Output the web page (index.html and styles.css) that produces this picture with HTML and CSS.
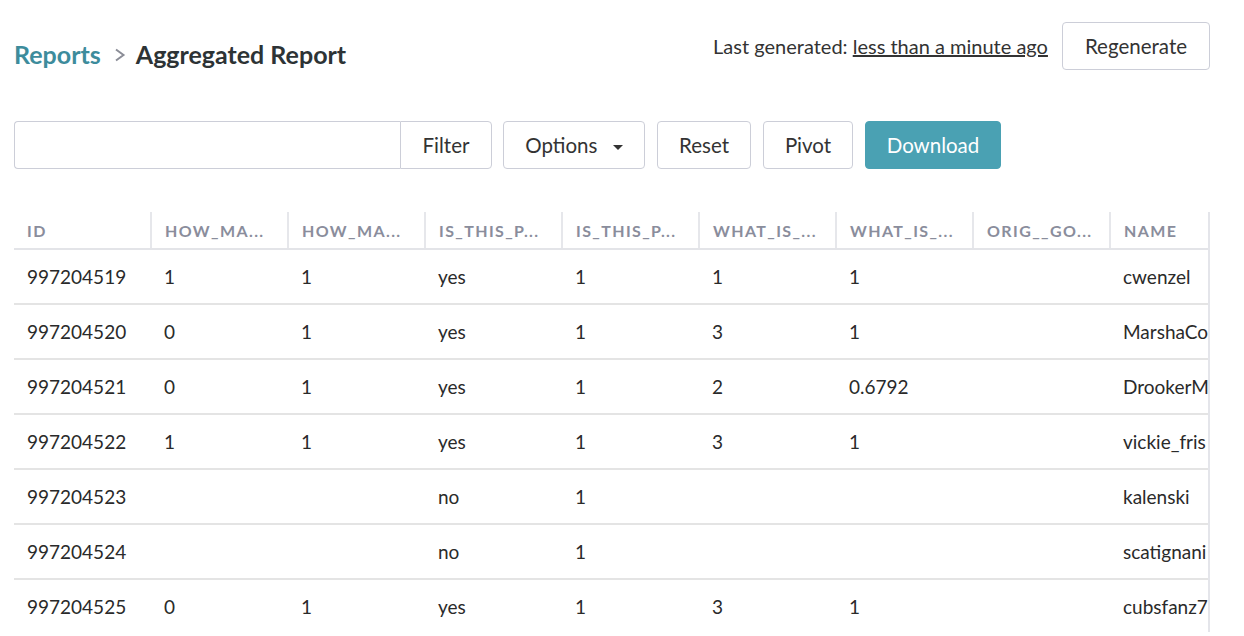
FILE: index.html
```html
<!DOCTYPE html>
<html lang="en">

<head>
    <meta charset="UTF-8">
    <meta name="viewport" content="width=device-width, initial-scale=1.0">
    <title>Aggregated Report</title>

    <link rel="stylesheet" href="styles.css">
</head>

<body>

    <div class="page">

        <header class="report-header">
            <h1 class="breadcrumb">
                <a class="breadcrumb__link" href="#">Reports</a>
                <svg class="breadcrumb__sep" width="12" height="14" viewBox="0 0 12 14">
                    <polyline points="2,1.5 9.5,7 2,12.5" fill="none" stroke="#8b8d97" stroke-width="2"/>
                </svg>
                <span class="breadcrumb__current">Aggregated Report</span>
            </h1>
            <div class="report-header__meta">
                <span class="generated">Last generated: <a href="#">less than a minute ago</a></span>
                <button class="btn">Regenerate</button>
            </div>
        </header>
        <!--/report-header-->

        <div class="toolbar">
            <div class="filter">
                <input class="filter__input" type="text">
                <button class="btn filter__btn">Filter</button>
            </div>
            <button class="btn btn--options">Options <span class="caret"></span></button>
            <button class="btn btn--reset">Reset</button>
            <button class="btn btn--pivot">Pivot</button>
            <button class="btn btn--primary">Download</button>
        </div>
        <!--/toolbar-->

        <div class="grid">
            <table class="grid__table">
                <thead>
                    <tr>
                        <th>ID</th>
                        <th>HOW_MA...</th>
                        <th>HOW_MA...</th>
                        <th>IS_THIS_P...</th>
                        <th>IS_THIS_P...</th>
                        <th>WHAT_IS_...</th>
                        <th>WHAT_IS_...</th>
                        <th>ORIG__GO...</th>
                        <th>NAME</th>
                    </tr>
                </thead>
                <tbody>
                    <tr>
                        <td>997204519</td><td>1</td><td>1</td><td>yes</td><td>1</td><td>1</td><td>1</td><td></td><td>cwenzel</td>
                    </tr>
                    <tr>
                        <td>997204520</td><td>0</td><td>1</td><td>yes</td><td>1</td><td>3</td><td>1</td><td></td><td>MarshaCo</td>
                    </tr>
                    <tr>
                        <td>997204521</td><td>0</td><td>1</td><td>yes</td><td>1</td><td>2</td><td>0.6792</td><td></td><td>DrookerM</td>
                    </tr>
                    <tr>
                        <td>997204522</td><td>1</td><td>1</td><td>yes</td><td>1</td><td>3</td><td>1</td><td></td><td>vickie_fris</td>
                    </tr>
                    <tr>
                        <td>997204523</td><td></td><td></td><td>no</td><td>1</td><td></td><td></td><td></td><td>kalenski</td>
                    </tr>
                    <tr>
                        <td>997204524</td><td></td><td></td><td>no</td><td>1</td><td></td><td></td><td></td><td>scatignani</td>
                    </tr>
                    <tr>
                        <td>997204525</td><td>0</td><td>1</td><td>yes</td><td>1</td><td>3</td><td>1</td><td></td><td>cubsfanz7</td>
                    </tr>
                </tbody>
            </table>
        </div>
        <!--/grid-->

    </div>

</body>

</html>
```

FILE: styles.css
```css
body {
    margin: 0;
    font-family: Lato, "Open Sans", sans-serif;
    color: #333;
    background: #fff;
}

.page {
    padding: 22px 0 0 14px;
    width: 1196px;
}

/* header */

.report-header {
    display: flex;
    justify-content: space-between;
    align-items: flex-start;
}

.breadcrumb {
    margin: 0;
    padding-top: 17px;
    font-size: 25px;
    font-weight: 700;
    line-height: 30px;
    display: flex;
    align-items: center;
}

.breadcrumb__link {
    color: #3d8c9c;
    text-decoration: none;
}

.breadcrumb__sep {
    margin: 1px 10px 0 13px;
}

.breadcrumb__current {
    color: #2d3335;
}

.report-header__meta {
    display: flex;
    align-items: center;
}

.generated {
    font-size: 20px;
    color: #333;
    margin-right: 14px;
}

.generated a {
    color: #333;
    text-decoration: underline;
}

/* buttons */

.btn {
    height: 48px;
    padding: 0 22px;
    font-family: inherit;
    font-size: 20.5px;
    color: #333;
    background: #fff;
    border: 1px solid #ccced8;
    border-radius: 4px;
    cursor: pointer;
}

.btn--primary {
    background: #4aa1b3;
    border-color: #4aa1b3;
    color: #fff;
}

.caret {
    display: inline-block;
    width: 0;
    height: 0;
    margin-left: 10px;
    vertical-align: middle;
    border-top: 5px solid #333;
    border-left: 5px solid transparent;
    border-right: 5px solid transparent;
}

/* toolbar */

.toolbar {
    display: flex;
    gap: 12px;
    margin-top: 51px;
}

.filter {
    display: flex;
    width: 478px;
}

.filter__input {
    flex: 1;
    height: 48px;
    box-sizing: border-box;
    border: 1px solid #ccced8;
    border-right: 0;
    border-radius: 4px 0 0 4px;
    padding: 0 12px;
    font-family: inherit;
    font-size: 18px;
    outline: none;
}

.filter__btn {
    width: 92px;
    padding: 0;
    border-radius: 0 4px 4px 0;
}

.btn--options {
    width: 142px;
    padding: 0;
    margin-left: -1px;
}

.btn--reset {
    width: 94px;
    padding: 0;
}

.btn--pivot {
    width: 90px;
    padding: 0;
}

.btn--primary {
    width: 136px;
    padding: 0;
}

/* grid */

.grid {
    margin-top: 43px;
    overflow: hidden;
    border-right: 2px solid #e4e5ea;
    height: 420px;
}

.grid__table {
    table-layout: fixed;
    border-collapse: collapse;
    width: 1233px;
}

.grid__table th,
.grid__table td {
    width: 137px;
    box-sizing: border-box;
    padding: 0 13px;
    text-align: left;
    white-space: nowrap;
    overflow: hidden;
}

.grid__table th {
    height: 37px;
    font-size: 16px;
    font-weight: 700;
    letter-spacing: 1.4px;
    color: #8a8d9c;
    border-left: 2px solid #e6e7eb;
    border-bottom: 2px solid #e3e4e8;
}

.grid__table th:first-child {
    border-left: 0;
}

.grid__table td {
    height: 55px;
    font-size: 19px;
    color: #2a2a2a;
    border-bottom: 2px solid #e4e4e4;
}
```
